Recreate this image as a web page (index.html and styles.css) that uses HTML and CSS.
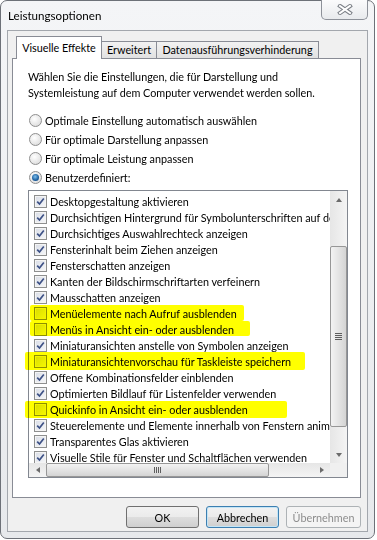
FILE: index.html
```html
<!DOCTYPE html>
<html lang="de">
<head>
  <meta charset="UTF-8">
  <title>Leistungsoptionen</title>
  <link rel="stylesheet" href="styles.css">
</head>
<body>
  <div class="window">
    <div class="titlebar">
      <span class="title">Leistungsoptionen</span>
      <div class="close-btn">
        <svg width="16" height="11" viewBox="0 0 16 11">
          <path d="M3 2 L13 9 M13 2 L3 9" stroke="#7b7f86" stroke-width="4" stroke-linecap="square" fill="none"/>
          <path d="M3 2 L13 9 M13 2 L3 9" stroke="#ffffff" stroke-width="2" stroke-linecap="square" fill="none"/>
        </svg>
      </div>
    </div>

    <div class="client">
      <div class="tabs">
        <div class="tab active">Visuelle Effekte</div>
        <div class="tab tab-erw">Erweitert</div>
        <div class="tab tab-dep">Datenausführungsverhinderung</div>
      </div>

      <div class="panel">
        <p class="intro">Wählen Sie die Einstellungen, die für Darstellung und<br>Systemleistung auf dem Computer verwendet werden sollen.</p>

        <div class="radios">
          <div class="radio"><span class="radio-box"></span>Optimale Einstellung automatisch auswählen</div>
          <div class="radio"><span class="radio-box"></span>Für optimale Darstellung anpassen</div>
          <div class="radio"><span class="radio-box"></span>Für optimale Leistung anpassen</div>
          <div class="radio"><span class="radio-box selected"></span>Benutzerdefiniert:</div>
        </div>

        <div class="listbox">
          <div class="list-main">
            <div class="rows" id="rows"></div>
            <div class="vscroll">
              <div class="arrow-btn"><span class="tri up"></span></div>
              <div class="vtrack">
                <div class="vthumb"><span class="grip"></span></div>
              </div>
              <div class="arrow-btn"><span class="tri down"></span></div>
            </div>
          </div>
          <div class="hscroll">
            <div class="arrow-btn h"><span class="tri left"></span></div>
            <div class="htrack">
              <div class="hthumb"><span class="hgrip"></span></div>
            </div>
            <div class="arrow-btn h"><span class="tri right"></span></div>
            <div class="corner"></div>
          </div>

          <!-- marker highlights -->
          <div class="mark mark-a"></div>
          <div class="mark mark-b"></div>
          <div class="mark mark-c"></div>
          <div class="mark mark-d"></div>
        </div>
      </div>

      <div class="buttons">
        <button class="btn">OK</button>
        <button class="btn default">Abbrechen</button>
        <button class="btn" disabled>Übernehmen</button>
      </div>
    </div>
  </div>

  <script>
    const items = [
      ['Desktopgestaltung aktivieren', true],
      ['Durchsichtigen Hintergrund für Symbolunterschriften auf dem Desktop', true],
      ['Durchsichtiges Auswahlrechteck anzeigen', true],
      ['Fensterinhalt beim Ziehen anzeigen', true],
      ['Fensterschatten anzeigen', true],
      ['Kanten der Bildschirmschriftarten verfeinern', true],
      ['Mausschatten anzeigen', true],
      ['Menüelemente nach Aufruf ausblenden', false],
      ['Menüs in Ansicht ein- oder ausblenden', false],
      ['Miniaturansichten anstelle von Symbolen anzeigen', true],
      ['Miniaturansichtenvorschau für Taskleiste speichern', false],
      ['Offene Kombinationsfelder einblenden', true],
      ['Optimierten Bildlauf für Listenfelder verwenden', true],
      ['Quickinfo in Ansicht ein- oder ausblenden', false],
      ['Steuerelemente und Elemente innerhalb von Fenstern animieren', true],
      ['Transparentes Glas aktivieren', true],
      ['Visuelle Stile für Fenster und Schaltflächen verwenden', true]
    ];

    const check = '<svg width="9" height="9" viewBox="0 0 9 9"><path d="M1.2 4.6 L3.5 7 L7.8 1.5" stroke="#3d5186" stroke-width="1.7" fill="none"/></svg>';

    document.getElementById('rows').innerHTML = items.map(([label, on]) =>
      `<div class="row"><span class="cb">${on ? check : ''}</span><span class="label">${label}</span></div>`
    ).join('');
  </script>
</body>
</html>
```

FILE: styles.css
```css
* {
  box-sizing: border-box;
}
body {
  margin: 0;
  background: #ffffff;
  font-family: "Lato", "Liberation Sans", sans-serif;
  font-size: 10.8px;
  color: #000;
}
.window {
  width: 375px;
  height: 539px;
  border: 1px solid #6d7178;
  border-radius: 7px;
  background: linear-gradient(#f4f5f7, #e7e9ec);
  padding: 0 6px 6px 6px;
  display: flex;
  flex-direction: column;
  position: relative;
}
.titlebar {
  height: 29px;
  display: flex;
  align-items: center;
  padding-left: 1px;
  padding-bottom: 1px;
}
.title {
  font-size: 11.6px;
}
.close-btn {
  position: absolute;
  top: -1px;
  right: 6px;
  width: 47px;
  height: 20px;
  border: 1px solid #8d9199;
  border-top: none;
  border-radius: 0 0 5px 5px;
  background: linear-gradient(#fbfbfc, #e8eaed);
  display: flex;
  align-items: center;
  justify-content: center;
}

.client {
  flex: 1;
  border: 1px solid #a3a7ad;
  background: #f0f0f0;
  padding: 3px 6px 0 4px;
  display: flex;
  flex-direction: column;
}
.tabs {
  display: flex;
  align-items: flex-end;
  height: 24px;
  padding-left: 4px;
  position: relative;
  z-index: 1;
}
.tab {
  height: 17px;
  padding: 0;
  border: 1px solid #898c95;
  border-bottom: none;
  background: linear-gradient(#f2f2f2, #e1e1e1);
  line-height: 16px;
  text-align: center;
  margin-left: -1px;
}
.tab.active {
  width: 86px;
  height: 23px;
  margin-left: 0;
  background: #ffffff;
  line-height: 21px;
  margin-bottom: -1px;
  margin-right: -1px;
  position: relative;
  z-index: 2;
}
.tab-erw {
  width: 56px;
  margin-left: 0;
}
.tab-dep {
  width: 163px;
}

.panel {
  width: 349px;
  height: 440px;
  border: 1px solid #898c95;
  background: #ffffff;
  padding: 10px 15px 0 15px;
}
.intro {
  margin: 0;
  line-height: 16px;
}
.radios {
  margin-top: 10px;
}
.radio {
  height: 19px;
  display: flex;
  align-items: center;
  padding-left: 1px;
}
.radio-box {
  width: 13px;
  height: 13px;
  border-radius: 50%;
  border: 1px solid #8f8f8f;
  background: radial-gradient(circle at 40% 35%, #ffffff, #e2e2e2 70%, #d0d0d0);
  margin-right: 3px;
  display: flex;
  align-items: center;
  justify-content: center;
}
.radio-box.selected::after {
  content: "";
  width: 7px;
  height: 7px;
  border-radius: 50%;
  background: radial-gradient(circle at 45% 40%, #7fc0ee, #1c5f9e 60%, #0d3f75);
}

.listbox {
  margin-top: 3px;
  width: 320px;
  height: 288px;
  border: 1px solid #828790;
  background: #ffffff;
  display: flex;
  flex-direction: column;
  position: relative;
}
.list-main {
  flex: 1;
  display: flex;
  min-height: 0;
}
.rows {
  flex: 1;
  overflow: hidden;
  padding-top: 2px;
}
.row {
  height: 16px;
  display: flex;
  align-items: center;
  padding-left: 5px;
  white-space: nowrap;
}
.cb {
  flex: none;
  width: 13px;
  height: 13px;
  border: 1px solid #8e8f8f;
  background: linear-gradient(135deg, #d9dde6, #f6f7f9);
  box-shadow: inset 0 0 0 1px #f4f4f4;
  margin-right: 3px;
  display: flex;
  align-items: center;
  justify-content: center;
}
.cb svg {
  display: block;
}

.vscroll {
  width: 17px;
  display: flex;
  flex-direction: column;
  background: linear-gradient(90deg, #e6e6e6, #f4f4f4);
}
.arrow-btn {
  height: 17px;
  display: flex;
  align-items: center;
  justify-content: center;
}
.arrow-btn.h {
  width: 17px;
  height: auto;
}
.vtrack {
  flex: 1;
  padding: 38px 0 19px;
  display: flex;
}
.vthumb {
  flex: 1;
  border: 1px solid #979797;
  border-radius: 2px;
  background: linear-gradient(90deg, #f3f3f3, #e4e4e4 50%, #d4d4d4);
  display: flex;
  align-items: center;
  justify-content: center;
}
.grip {
  width: 7px;
  height: 7px;
  background: repeating-linear-gradient(#5d5d5d 0 1px, transparent 1px 2px);
}
.hscroll {
  height: 14px;
  display: flex;
  background: linear-gradient(#e6e6e6, #f4f4f4);
}
.htrack {
  flex: 1;
  display: flex;
  padding-right: 44px;
}
.hthumb {
  flex: 1;
  border: 1px solid #979797;
  border-radius: 2px;
  background: linear-gradient(#f3f3f3, #e4e4e4 50%, #d4d4d4);
  display: flex;
  align-items: center;
  justify-content: center;
}
.hgrip {
  width: 7px;
  height: 6px;
  background: repeating-linear-gradient(90deg, #5d5d5d 0 1px, transparent 1px 2px);
}
.corner {
  width: 17px;
  background: #f0f0f0;
}
.tri {
  width: 0;
  height: 0;
  border: 3px solid transparent;
}
.tri.up {
  border-bottom: 4px solid #6b6b6b;
  border-top: none;
}
.tri.down {
  border-top: 4px solid #6b6b6b;
  border-bottom: none;
}
.tri.left {
  border-right: 4px solid #6b6b6b;
  border-left: none;
}
.tri.right {
  border-left: 4px solid #6b6b6b;
  border-right: none;
}

.mark {
  position: absolute;
  background: #ffff00;
  mix-blend-mode: multiply;
  border-radius: 2px;
}
.mark-a {
  left: 1px;
  top: 114px;
  width: 214px;
  height: 16px;
}
.mark-b {
  left: 1px;
  top: 130px;
  width: 220px;
  height: 15px;
}
.mark-c {
  left: -4px;
  top: 161px;
  width: 280px;
  height: 18px;
}
.mark-d {
  left: -4px;
  top: 210px;
  width: 262px;
  height: 17px;
}

.buttons {
  display: flex;
  justify-content: flex-end;
  gap: 7px;
  padding: 8px 0 0;
}
.btn {
  width: 73px;
  height: 22px;
  border: 1px solid #707070;
  border-radius: 3px;
  background: linear-gradient(#f2f2f2, #ebebeb 50%, #dddddd 51%, #cfcfcf);
  font-family: "Lato", "Liberation Sans", sans-serif;
  font-size: 10.8px;
  color: #000;
  padding: 0;
}
.btn.default {
  border-color: #3c7fb1;
  box-shadow: inset 0 0 0 1px #c4e5f6;
}
.btn:disabled {
  width: 75px;
  border-color: #adb2b5;
  background: #f4f4f4;
  color: #8d8d8d;
}
```
